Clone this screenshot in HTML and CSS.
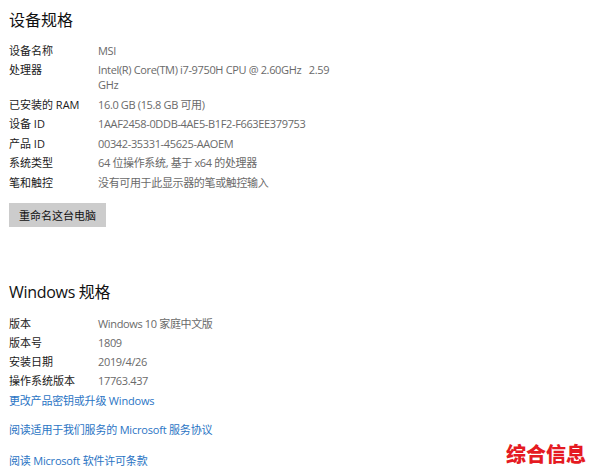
FILE: index.html
```html
<!DOCTYPE html>
<html lang="zh-CN">
<head>
<meta charset="utf-8">
<title>设备规格</title>
<link rel="stylesheet" href="styles.css">
</head>
<body>
<main class="page">
  <h1 class="title">设备规格</h1>
  <dl class="specs specs-device">
    <dt>设备名称</dt><dd>MSI</dd>
    <dt>处理器</dt><dd>Intel(R) Core(TM) i7-9750H CPU @ 2.60GHz&nbsp;&nbsp; 2.59<br>GHz</dd>
    <dt>已安装的 RAM</dt><dd>16.0 GB (15.8 GB 可用)</dd>
    <dt>设备 ID</dt><dd>1AAF2458-0DDB-4AE5-B1F2-F663EE379753</dd>
    <dt>产品 ID</dt><dd>00342-35331-45625-AAOEM</dd>
    <dt>系统类型</dt><dd>64 位操作系统, 基于 x64 的处理器</dd>
    <dt>笔和触控</dt><dd>没有可用于此显示器的笔或触控输入</dd>
  </dl>
  <button class="btn" type="button">重命名这台电脑</button>

  <h2 class="title title-windows">Windows 规格</h2>
  <dl class="specs specs-windows">
    <dt>版本</dt><dd>Windows 10 家庭中文版</dd>
    <dt>版本号</dt><dd>1809</dd>
    <dt>安装日期</dt><dd>2019/4/26</dd>
    <dt>操作系统版本</dt><dd>17763.437</dd>
  </dl>
  <a class="link link-first" href="#">更改产品密钥或升级 Windows</a>
  <a class="link link-second" href="#">阅读适用于我们服务的 Microsoft 服务协议</a>
  <a class="link link-third" href="#">阅读 Microsoft 软件许可条款</a>
</main>
<div class="watermark">综合信息</div>
</body>
</html>
```
FILE: styles.css
```css
html, body {
  margin: 0;
  padding: 0;
  background: #ffffff;
}
body {
  width: 594px;
  height: 474px;
  overflow: hidden;
  position: relative;
  font-family: "Open Sans", "Noto Sans CJK SC", sans-serif;
  color: #1a1a1a;
}
.page {
  display: flex;
  flex-direction: column;
  align-items: flex-start;
  padding-left: 9px;
}
.title {
  margin: 10px 0 0;
  font-size: 16px;
  line-height: 20px;
  font-weight: 400;
  color: #111;
}
.title-windows {
  margin-top: 55px;
  letter-spacing: -0.3px;
}
.specs {
  display: grid;
  grid-template-columns: 89px auto;
  row-gap: 4.5px;
  margin: 12.5px 0 0;
  font-size: 11px;
  line-height: 15px;
}
.specs-windows {
  row-gap: 4px;
  margin-top: 13.5px;
}
.specs dt {
  color: #1a1a1a;
  white-space: nowrap;
}
.specs dd {
  margin: 0;
  color: #6a6a6a;
  white-space: nowrap;
  letter-spacing: -0.35px;
}
.btn {
  margin-top: 13.5px;
  width: 97px;
  height: 24px;
  padding: 0;
  border: none;
  background: #cccccc;
  font-family: "Open Sans", "Noto Sans CJK SC", sans-serif;
  font-size: 11px;
  color: #111;
}
.link {
  font-size: 11px;
  line-height: 15px;
  color: #2a74c4;
  text-decoration: none;
  letter-spacing: -0.2px;
}
.link-first { margin-top: 5px; }
.link-second { margin-top: 14px; }
.link-third { margin-top: 16px; }
.watermark {
  position: absolute;
  right: 8px;
  top: 443px;
  font-family: "Noto Sans CJK SC", sans-serif;
  font-weight: 900;
  font-size: 20px;
  line-height: 22px;
  color: #e51a22;
  letter-spacing: 0;
}
```
